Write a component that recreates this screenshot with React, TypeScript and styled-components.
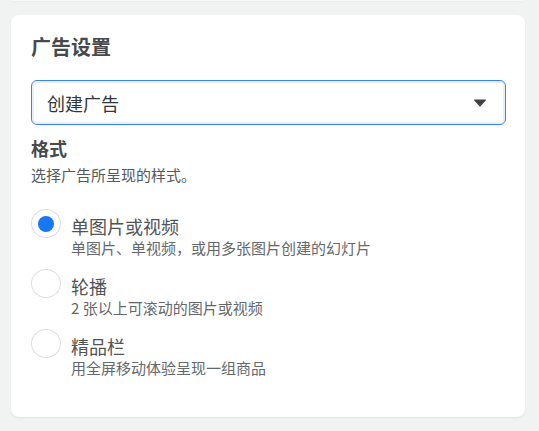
import * as React from 'react';
import { useState } from 'react';
import styled, { createGlobalStyle } from 'styled-components';

const FONT = `"Noto Sans CJK SC", "Noto Sans", Roboto, sans-serif`;

type OptionProps = {
  checked: boolean;
};

const formats = [
  { key: 'single', label: '单图片或视频', desc: '单图片、单视频，或用多张图片创建的幻灯片' },
  { key: 'carousel', label: '轮播', desc: '2 张以上可滚动的图片或视频' },
  { key: 'collection', label: '精品栏', desc: '用全屏移动体验呈现一组商品' },
];

const GlobalStyle = createGlobalStyle`
  html, body {
    margin: 0;
    background: #f1f2f2;
    font-family: ${FONT};
  }
  * {
    box-sizing: border-box;
  }
`;

const App = () => {
  const [format, setFormat] = useState('single');

  return (
    <>
      <GlobalStyle />
      <Page>
        <PrevCard />
        <Card>
          <Title>广告设置</Title>
          <Select>
            <SelectText>创建广告</SelectText>
            <Caret viewBox="0 0 12 8">
              <path d="M0.6 0.5h10.8c0.5 0 0.8 0.6 0.4 1L6.5 7.2c-0.3 0.3-0.7 0.3-1 0L0.2 1.5C-0.2 1.1 0.1 0.5 0.6 0.5z" />
            </Caret>
          </Select>
          <SectionTitle>格式</SectionTitle>
          <SectionHint>选择广告所呈现的样式。</SectionHint>
          <OptionList>
            {formats.map((f) => (
              <Option key={f.key} onClick={() => setFormat(f.key)}>
                <Radio checked={format === f.key} />
                <OptionText>
                  <OptionLabel>{f.label}</OptionLabel>
                  <OptionDesc>{f.desc}</OptionDesc>
                </OptionText>
              </Option>
            ))}
          </OptionList>
        </Card>
      </Page>
    </>
  );
};

const Page = styled.div`
  width: 539px;
  height: 431px;
  padding: 0 14px 0 11px;
  display: flex;
  flex-direction: column;
  overflow: hidden;
`;

const PrevCard = styled.div`
  height: 1px;
  margin: 0 3px 14px 0;
  background: #f8f8f8;
  box-shadow: 0 1px 2px rgba(0, 0, 0, 0.05);
`;

const Card = styled.div`
  background: #ffffff;
  border-radius: 8px;
  box-shadow: 0 1px 2px rgba(0, 0, 0, 0.07);
  padding: 20px 19px 0 20px;
  height: 402px;
  display: flex;
  flex-direction: column;
`;

const Title = styled.h2`
  margin: 0;
  font-size: 20px;
  line-height: 24px;
  font-weight: 700;
  color: #46494d;
`;

const Select = styled.div`
  margin-top: 21px;
  height: 45px;
  border: 1px solid #3b82f0;
  border-radius: 6px;
  box-shadow: inset 0 0 0 2px #e8f0fc;
  display: flex;
  align-items: center;
  justify-content: space-between;
  padding: 0 19px 0 15px;
  cursor: pointer;
`;

const SelectText = styled.span`
  font-size: 18px;
  color: #33363a;
`;

const Caret = styled.svg`
  width: 12px;
  height: 8px;
  fill: #3f4246;
`;

const SectionTitle = styled.h3`
  margin: 11px 0 0;
  font-size: 18px;
  line-height: 24px;
  font-weight: 700;
  color: #46494d;
`;

const SectionHint = styled.p`
  margin: 5px 0 0;
  font-size: 15px;
  line-height: 20px;
  color: #55585c;
`;

const OptionList = styled.div`
  margin-top: 24px;
  display: flex;
  flex-direction: column;
  gap: 11px;
`;

const Option = styled.label`
  display: flex;
  align-items: flex-start;
  gap: 10px;
  cursor: pointer;
`;

const Radio = styled.span<OptionProps>`
  flex: none;
  width: 30px;
  height: 29px;
  border-radius: 50%;
  border: 1px solid #dcdee1;
  display: flex;
  align-items: center;
  justify-content: center;
  &::after {
    content: '';
    width: 16px;
    height: 16px;
    border-radius: 50%;
    background: #1877f2;
    display: ${(props) => (props.checked ? 'block' : 'none')};
  }
`;

const OptionText = styled.div`
  padding-top: 5px;
  display: flex;
  flex-direction: column;
`;

const OptionLabel = styled.span`
  font-size: 18px;
  line-height: 24px;
  color: #505357;
`;

const OptionDesc = styled.span`
  font-size: 15px;
  line-height: 20px;
  color: #65686c;
`;

export default App;
